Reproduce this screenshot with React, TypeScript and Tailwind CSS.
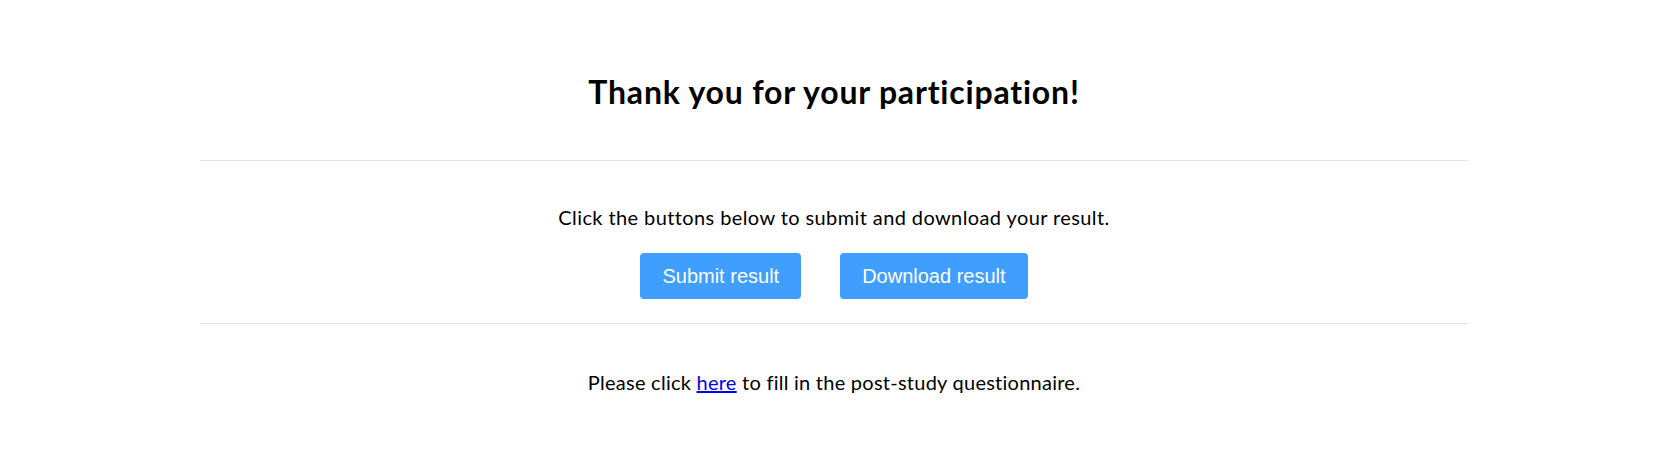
export default function App() {
  return (
    <div className="min-h-screen bg-white text-black" style={{ fontFamily: "Lato, 'Noto Sans', sans-serif" }}>
      <div className="mx-auto w-[76%] pt-[73px] text-center">
        <h1 className="text-[32px] font-bold leading-[38px] tracking-[0.8px]">Thank you for your participation!</h1>

        <div className="mt-[49px] h-px bg-[#e4e4ea]" />

        <p className="mt-[44px] text-[20px] leading-6 tracking-[0.4px]">
          Click the buttons below to submit and download your result.
        </p>

        <div
          className="mt-[24px] flex justify-center gap-[39px]"
          style={{ fontFamily: "'Liberation Sans', Arial, sans-serif" }}
        >
          <button className="h-[46px] rounded px-[22px] text-[20px] text-white bg-[#409eff]">
            Submit result
          </button>
          <button className="h-[46px] rounded px-[22px] text-[20px] text-white bg-[#409eff]">
            Download result
          </button>
        </div>

        <div className="mt-[24px] h-px bg-[#e4e4ea]" />

        <p className="mt-[46px] text-[20px] leading-6 tracking-[0.25px]">
          Please click{" "}
          <a href="#" className="text-[#0000ee] underline">
            here
          </a>{" "}
          to fill in the post-study questionnaire.
        </p>
      </div>
    </div>
  );
}
